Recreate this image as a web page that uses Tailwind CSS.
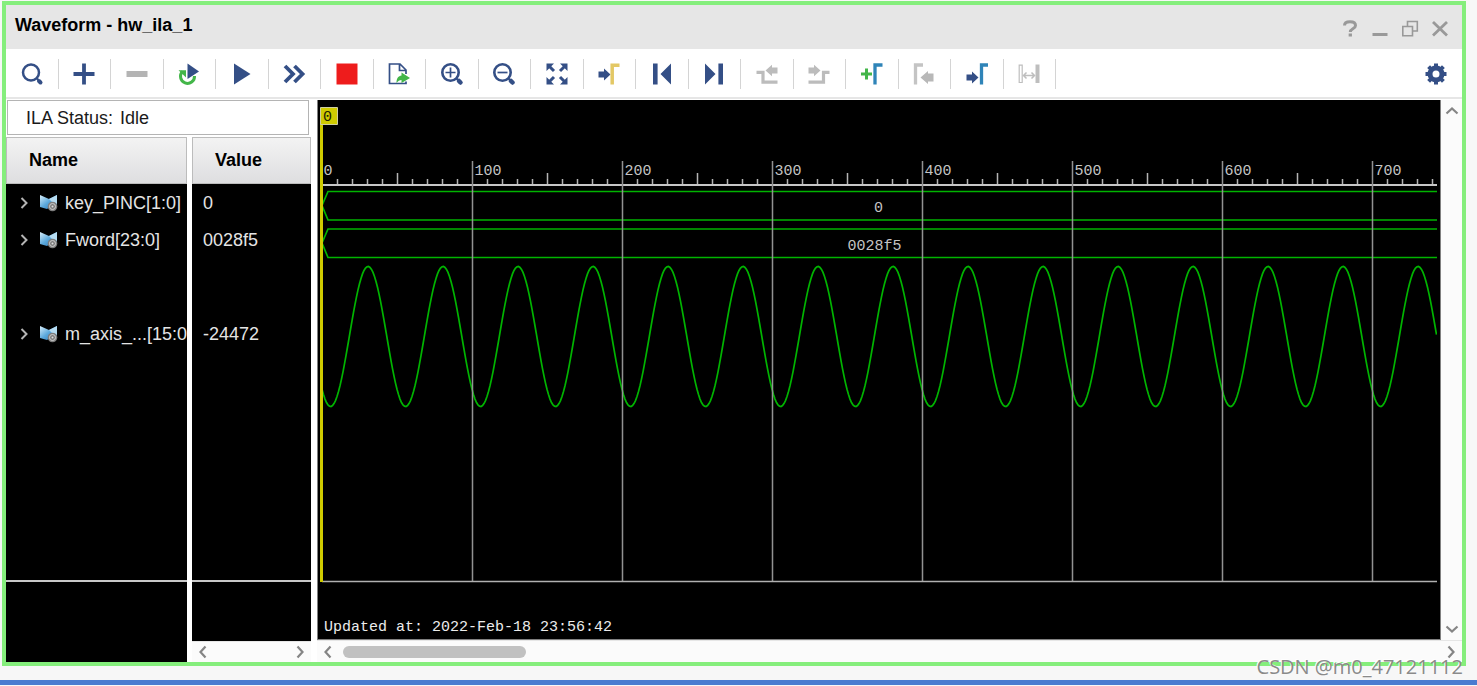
<!DOCTYPE html>
<html lang="en">
<head>
<meta charset="utf-8">
<title>Waveform - hw_ila_1</title>
<script src="https://cdn.jsdelivr.net/npm/@tailwindcss/browser@4"></script>
</head>
<body class="relative flex min-h-screen flex-col bg-[#f7f7f7] font-['Liberation_Sans',Arial,sans-serif] text-lg leading-6 text-black">
<main class="mt-px mr-[11px] mb-[14px] ml-0.5 flex flex-1 flex-col border-4 border-[#85ee7c] bg-white">
  <header class="flex h-11 items-center justify-between bg-[#e6e6e6] pr-2.5 pl-[9px]">
    <h1 class="pb-1 font-bold">Waveform - hw_ila_1</h1>
    <div class="flex gap-[6px] pt-1 text-[#999]">
      <button aria-label="Help" class="size-6"><svg viewBox="0 0 24 24" fill="none" stroke="currentColor"><path d="M6.500 8.500C6.500 5.500 9 4.800 12 4.800S17.500 6 17.500 8.500C17.500 12 12.300 11.500 12.300 15" stroke-width="3"/><path d="M12.300 16.500v3" stroke-width="3.300"/></svg></button>
      <button aria-label="Minimize" class="size-6"><svg viewBox="0 0 24 24" fill="none" stroke="currentColor" stroke-width="3"><path d="M4.500 17.500h15"/></svg></button>
      <button aria-label="Restore" class="size-6"><svg viewBox="0 0 24 24" fill="none" stroke="currentColor" stroke-width="1.600"><path d="M4.800 9.500h9.700v9.300H4.800zM9.500 9.500V4.500h9.800v9.500h-4.800"/></svg></button>
      <button aria-label="Close" class="size-6"><svg viewBox="0 0 24 24" fill="none" stroke="currentColor" stroke-width="2.800"><path d="M5 5l14 13.500M19 5L5 18.500"/></svg></button>
    </div>
  </header>

  <div class="flex h-[50px] items-center justify-between border-b-2 border-[#e6e6e6] pt-px pr-[14px] text-[#344f86]">
    <div class="grid w-[1050px] grid-cols-20 *:flex *:h-[30px] *:items-center *:justify-center *:border-r *:border-[#d4d4d4]">
      <button aria-label="Search"><svg class="size-6" viewBox="0 0 24 24" fill="none" stroke="currentColor"><circle cx="11" cy="10.500" r="8" stroke-width="2.500"/><path d="M16.500 16l2 2" stroke-width="2"/><path d="M19 19l1.500 1.500" stroke-width="4" stroke-linecap="round"/></svg></button>
      <button aria-label="Add"><svg class="size-6" viewBox="0 0 24 24" fill="none" stroke="currentColor" stroke-width="3.800"><path d="M12 1.500v21M1.500 12h21"/></svg></button>
      <button aria-label="Remove"><svg class="size-6" viewBox="0 0 24 24" fill="#b4b4b4"><path d="M1.500 9h21v6h-21z"/></svg></button>
      <button aria-label="Run trigger with auto re-trigger"><svg class="size-6" viewBox="0 0 24 24"><path d="M5.500 9.500A7 7 0 1 0 17.500 14" fill="none" stroke="#43b649" stroke-width="3"/><path d="M1.500 8.200h7.500v7.200z" fill="#43b649"/><path d="M10.500 1.500L22 9.500l-11.500 7.500z" fill="currentColor"/></svg></button>
      <button aria-label="Run trigger"><svg class="size-6" viewBox="0 0 24 24" fill="currentColor"><path d="M4 1.500L20.500 12 4 22.500z"/></svg></button>
      <button aria-label="Run trigger immediate"><svg class="size-6" viewBox="0 0 24 24" fill="none" stroke="currentColor" stroke-width="3.800"><path d="M3 4l8 8-8 8M12.500 4l8 8-8 8"/></svg></button>
      <button aria-label="Stop trigger"><svg class="size-6" viewBox="0 0 24 24" fill="#ee1c1c"><path d="M1.500 1.500h21v21h-21z"/></svg></button>
      <button aria-label="Export data"><svg class="size-6" viewBox="0 0 24 24"><path d="M19 12V8l-6-6H2.500v19.500H19v-2M12.500 2v6.500H19" fill="none" stroke="currentColor" stroke-width="1.700"/><path d="M14.500 10.500l8.500 5.500-8.500 5v-3c-2 0-3.500 1-5 3 0-5 2-7 5-7.500z" fill="#43b649"/></svg></button>
      <button aria-label="Zoom in"><svg class="size-6" viewBox="0 0 24 24" fill="none" stroke="currentColor"><circle cx="10.500" cy="10.500" r="8.200" stroke-width="2.600"/><path d="M10.500 5.500v10M5.500 10.500h10" stroke-width="1.700"/><path d="M16 16l2 2" stroke-width="2"/><path d="M19 19l1.500 1.500" stroke-width="4.500" stroke-linecap="round"/></svg></button>
      <button aria-label="Zoom out"><svg class="size-6" viewBox="0 0 24 24" fill="none" stroke="currentColor"><circle cx="10.500" cy="10.500" r="8.200" stroke-width="2.600"/><path d="M5.500 10.500h10" stroke-width="1.700"/><path d="M16 16l2 2" stroke-width="2"/><path d="M19 19l1.500 1.500" stroke-width="4.500" stroke-linecap="round"/></svg></button>
      <button aria-label="Zoom fit"><svg class="size-6" viewBox="0 0 24 24" fill="currentColor"><path d="M1.500 1.500h7.500l-7.500 7.500zM22.500 1.500h-7.500l7.500 7.500zM1.500 22.500h7.500l-7.500-7.500zM22.500 22.500h-7.500l7.500-7.500z"/><path d="M4 4l5 5M20 4l-5 5M4 20l5-5M20 20l-5-5" stroke="currentColor" stroke-width="3"/></svg></button>
      <button aria-label="Go to cursor"><svg class="size-6" viewBox="0 0 24 24"><path d="M1.500 9.500H7V6.500l6.500 6-6.500 6v-3H1.500z" fill="currentColor"/><path d="M15.200 22.500V3.200h7.300" fill="none" stroke="#e3c865" stroke-width="3.500"/></svg></button>
      <button aria-label="Go to first"><svg class="size-6" viewBox="0 0 24 24" fill="currentColor"><path d="M3 1.500h4.600v21H3zM21 1.500v21L10.500 12z"/></svg></button>
      <button aria-label="Go to last"><svg class="size-6" viewBox="0 0 24 24" fill="currentColor"><path d="M21 1.500h-4.600v21H21zM3 1.500v21L13.500 12z"/></svg></button>
      <button aria-label="Previous transition"><svg class="size-6" viewBox="0 0 24 24"><path d="M1.500 10.300H8v9.900h14.500" fill="none" stroke="#bcbcbc" stroke-width="3.200"/><path d="M22.500 5.500H17V2.800L10.500 8.500l6.500 5.700v-2.700h5.500z" fill="#bcbcbc"/></svg></button>
      <button aria-label="Next transition"><svg class="size-6" viewBox="0 0 24 24"><path d="M1.500 20.200H16.500v-9.900h6" fill="none" stroke="#bcbcbc" stroke-width="3.200"/><path d="M1.500 5.500H7V2.800l6.500 5.700L7 14.200v-2.700H1.500z" fill="#bcbcbc"/></svg></button>
      <button aria-label="Add marker"><svg class="size-6" viewBox="0 0 24 24" fill="none"><path d="M6.500 6.500v11M1 12h11" stroke="#43b649" stroke-width="3"/><path d="M15 22.500V3h7.500" stroke="#2f84b8" stroke-width="3.300"/></svg></button>
      <button aria-label="Previous marker"><svg class="size-6" viewBox="0 0 24 24"><path d="M3.500 22.500V3h7.500" fill="none" stroke="#c4c4c4" stroke-width="3.300"/><path d="M21.500 11.500H16V9l-7.500 6.500L16 22v-2.500h5.500z" fill="#b8b8b8"/></svg></button>
      <button aria-label="Next marker"><svg class="size-6" viewBox="0 0 24 24"><path d="M1.500 12.500H7V9.500l6.500 6-6.500 6v-3H1.500z" fill="currentColor"/><path d="M16.500 22.500V3h6.500" fill="none" stroke="#2f84b8" stroke-width="3.300"/></svg></button>
      <button aria-label="Swap cursors"><svg class="size-6" viewBox="0 0 24 24" fill="none" stroke="#bebebe"><path d="M2.200 3.200h3v17.300h-3z" stroke-width="1.200"/><path d="M20.500 2.500v18.500" stroke-width="4"/><path d="M6.500 13.500h11M9.500 10.500l-3 3 3 3M14.500 10.500l3 3-3 3" stroke-width="1.500"/></svg></button>
    </div>
    <button aria-label="Settings"><svg class="size-6" viewBox="0 0 24 24" fill="none" stroke="currentColor"><circle cx="12" cy="12" r="6" stroke-width="5"/><path d="M12 1.500v4M12 18.500v4M1.500 12h4M18.500 12h4M4.600 4.600l3 3M16.400 16.400l3 3M4.600 19.400l3-3M16.400 7.600l3-3" stroke-width="4"/></svg></button>
  </div>

  <div class="flex flex-1 gap-[6px]">
    <section class="flex w-[305px] flex-col">
      <p class="mt-px mr-0.5 mb-0.5 ml-px flex h-[35px] items-center gap-[7px] border border-[#b4b4b4] bg-white pl-[18px] text-[#1a1a1a]"><span>ILA Status:</span><span>Idle</span></p>
      <div class="flex flex-1 gap-[5px]">
        <div class="flex w-[181px] flex-col overflow-hidden bg-black text-[#e4e4e4]">
          <h2 class="h-[47px] border border-[#bcbcbc] bg-linear-to-b from-[#f3f3f3] to-[#dedee0] py-2.5 pl-[22px] font-bold text-black">Name</h2>
          <ul class="h-[398px] border-b-2 border-[#c8c8c8] whitespace-nowrap">
            <li class="flex h-[37px] items-center pl-3"><svg class="mr-2 size-3" viewBox="0 0 12 12" fill="none" stroke="#b4b4b4" stroke-width="2"><path d="M3.500 1l5 5-5 5"/></svg><svg class="mr-[7px] h-[18px] w-5 shrink-0" viewBox="0 0 20 18"><use href="#bus"/></svg>key_PINC[1:0]</li>
            <li class="flex h-[38px] items-center pl-3"><svg class="mr-2 size-3" viewBox="0 0 12 12" fill="none" stroke="#b4b4b4" stroke-width="2"><path d="M3.500 1l5 5-5 5"/></svg><svg class="mr-[7px] h-[18px] w-5 shrink-0" viewBox="0 0 20 18"><use href="#bus"/></svg>Fword[23:0]</li>
            <li class="flex h-[150px] items-center pl-3"><svg class="mr-2 size-3 shrink-0" viewBox="0 0 12 12" fill="none" stroke="#b4b4b4" stroke-width="2"><path d="M3.500 1l5 5-5 5"/></svg><svg class="mr-[7px] h-[18px] w-5 shrink-0" viewBox="0 0 20 18"><use href="#bus"/></svg>m_axis_...[15:0</li>
          </ul>
        </div>
        <div class="flex flex-1 flex-col bg-black text-[#e4e4e4]">
          <h2 class="h-[47px] border border-[#bcbcbc] bg-linear-to-b from-[#f3f3f3] to-[#dedee0] py-2.5 pl-[22px] font-bold text-black">Value</h2>
          <ul class="h-[398px] border-b-2 border-[#c8c8c8] pl-[11px]">
            <li class="flex h-[37px] items-center">0</li>
            <li class="flex h-[38px] items-center">0028f5</li>
            <li class="flex h-[150px] items-center">-24472</li>
          </ul>
          <div class="mt-auto flex h-[21px] items-center justify-between border-t border-[#e6e6e6] bg-[#fbfbfb] px-1">
            <button aria-label="Scroll left"><svg class="size-[14px]" viewBox="0 0 14 14" fill="none" stroke="#858585" stroke-width="2.200"><path d="M9.500 1.500L4.500 7l5 5.500"/></svg></button>
            <button aria-label="Scroll right"><svg class="size-[14px]" viewBox="0 0 14 14" fill="none" stroke="#858585" stroke-width="2.200"><path d="M4.500 1.500l5 5.500-5 5.500"/></svg></button>
          </div>
        </div>
      </div>
    </section>

    <section class="flex flex-1 flex-col pt-px">
      <div class="flex flex-1">
        <div class="min-w-0 flex-1 border-x border-b border-[#808080] bg-black pr-[3px] pl-0.5">
          <svg id="plot" class="h-[536px] w-full overflow-hidden font-['Liberation_Mono','Courier_New',monospace] text-[15px]" fill="none" aria-label="Waveform plot">
            <g id="ticks" stroke="#b4b4b4"></g>
            <path d="M2 85h4000" stroke="#c8c8c8" stroke-width="2"/>
            <g stroke="#00b400" stroke-width="1.700">
              <path d="M4000 91.500H8L2 105.500l6 14.500H4000"/>
              <path d="M4000 129H8L2 143l6 14.500H4000"/>
              <path id="sine"/>
            </g>
            <g id="grid" stroke="#929292" stroke-width="1.500"></g>
            <path d="M2 481.500h4000" stroke="#b0b0b0" stroke-width="1.500"/>
            <path d="M1.500 8v474" stroke="#cfcb00" stroke-width="3"/>
            <path d="M.5 7.500h17v17H.5z" fill="#cfcb00" stroke="#cfcfa0"/>
            <text x="3" y="21" fill="#222200">0</text>
            <g id="labels" fill="#c4c4c4"></g>
            <g fill="#c4c4c4" text-anchor="middle">
              <text x="50%" y="112">0</text>
              <text x="50%" y="150" dx="-4">0028f5</text>
            </g>
            <text x="4" y="531" fill="#ececec">Updated at: 2022-Feb-18 23:56:42</text>
          </svg>
        </div>
        <div class="flex w-[21px] flex-col items-center justify-between bg-[#fbfbfb] py-1">
          <button aria-label="Scroll up"><svg class="size-[14px]" viewBox="0 0 14 14" fill="none" stroke="#858585" stroke-width="2.200"><path d="M1.500 9.500L7 4.500l5.500 5"/></svg></button>
          <button aria-label="Scroll down"><svg class="size-[14px]" viewBox="0 0 14 14" fill="none" stroke="#858585" stroke-width="2.200"><path d="M1.500 4.500l5.500 5 5.500-5"/></svg></button>
        </div>
      </div>
      <div class="flex h-[22px] items-center border-t border-[#e6e6e6] bg-[#fbfbfb] px-1">
        <button aria-label="Scroll left"><svg class="size-[14px]" viewBox="0 0 14 14" fill="none" stroke="#858585" stroke-width="2.200"><path d="M9.500 1.500L4.500 7l5 5.500"/></svg></button>
        <div class="mx-2 flex-1"><div class="h-3 w-[183px] rounded-full bg-[#c1c1c1]"></div></div>
        <button aria-label="Scroll right"><svg class="size-[14px]" viewBox="0 0 14 14" fill="none" stroke="#858585" stroke-width="2.200"><path d="M4.500 1.500l5 5.500-5 5.500"/></svg></button>
      </div>
    </section>
  </div>
</main>
<div class="mb-px h-[5px] bg-[#4a7bd0]"></div>
<p class="absolute right-[14px] bottom-[7px] font-['Open_Sans',sans-serif] text-xl leading-6 text-[#8a8a8a] [text-shadow:-1px_-1px_0_#fff]">CSDN @m0_47121112</p>

<svg class="absolute size-0" aria-hidden="true">
  <defs>
    <linearGradient id="blue" x1="0" y1="0" x2="1" y2="1"><stop offset="0" stop-color="#d8eefa"/><stop offset=".5" stop-color="#5aa8dc"/><stop offset="1" stop-color="#2a6fae"/></linearGradient>
    <g id="bus">
      <path d="M2 1l9 4 8-4v12h-7l-3 2-7-2z" fill="url(#blue)"/>
      <path d="M11 5l8-4v9l-5-2z" fill="#b5dcf2"/>
      <circle cx="14.500" cy="12.500" r="4.800" fill="#7d7d7d"/>
      <circle cx="14.500" cy="12.500" r="3" fill="none" stroke="#d0d0d0"/>
      <circle cx="14.500" cy="12.500" r="1" fill="#e0e0e0"/>
    </g>
  </defs>
</svg>
<script>
  // Time axis: 1.5px per sample, a grid line every 100 samples.
  const scale = 1.5, origin = 2;
  const byId = (id) => document.getElementById(id);

  function draw(width) {
    const last = (width - origin) / scale;
    let ticks = '', grid = '', labels = '', sine = '';
    for (let t = 0; t < last; t += 10) {
      const x = origin + t * scale + 0.5;
      if (t % 100) ticks += `<path d="M${x} 85V${t % 50 ? 79 : 73}" stroke-width="1.5"/>`;
      else {
        if (t) grid += `<path d="M${x} 61V481"/>`;
        if (t < last - 20) labels += `<text x="${t ? x + 2 : x + 1}" y="75">${t}</text>`;
      }
    }
    for (let t = 0; t < last; t++) {
      const y = 236.5 - 70 * Math.cos(2 * Math.PI * (t - 30.7) / 50);
      sine += `${t ? 'L' : 'M'}${origin + t * scale} ${y.toFixed(1)}`;
    }
    byId('ticks').innerHTML = ticks;
    byId('grid').innerHTML = grid;
    byId('labels').innerHTML = labels;
    byId('sine').setAttribute('d', sine);
  }

  draw(1117);
  new ResizeObserver(([entry]) => draw(entry.contentRect.width)).observe(byId('plot'));
</script>
</body>
</html>
